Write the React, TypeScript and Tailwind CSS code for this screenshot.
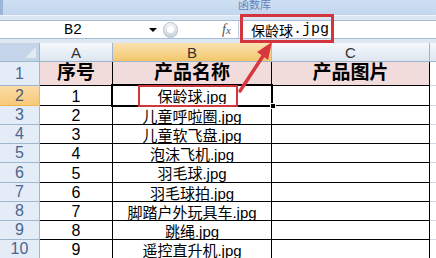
const rows: { n: string; name: string; h: string }[] = [
  { n: "1", name: "保龄球.jpg", h: "h-[20px]" },
  { n: "2", name: "儿童呼啦圈.jpg", h: "h-[19px]" },
  { n: "3", name: "儿童软飞盘.jpg", h: "h-[19px]" },
  { n: "4", name: "泡沫飞机.jpg", h: "h-[19px]" },
  { n: "5", name: "羽毛球.jpg", h: "h-[20px]" },
  { n: "6", name: "羽毛球拍.jpg", h: "h-[19px]" },
  { n: "7", name: "脚踏户外玩具车.jpg", h: "h-[19px]" },
  { n: "8", name: "跳绳.jpg", h: "h-[19px]" },
  { n: "9", name: "遥控直升机.jpg", h: "h-[19px]" },
];

export default function App() {
  return (
    <div className="relative h-[258px] w-[436px] overflow-hidden bg-white font-['Liberation_Sans','Noto_Sans_CJK_SC',sans-serif] text-black">
      {/* ribbon group strip */}
      <div className="flex h-[15px] border-l-[3px] border-[#9cb6d8] bg-linear-to-b from-[#cfdff2] to-[#c2d6ee]">
        <span className="ml-[235px] text-[11px] leading-[11px] text-[#6584b6]">函数库</span>
      </div>
      <div className="h-[5px] border-t border-[#eef3fa] bg-[#dbe6f4]" />

      {/* formula bar */}
      <div className="flex h-[19px] items-center border-y border-[#a7bcd6] bg-white">
        <div className="w-[146px] pt-px text-center font-['Liberation_Mono',monospace] text-[15px] leading-none">B2</div>
        <div className="flex w-[14px] justify-center">
          <span className="h-0 w-0 border-x-[4px] border-t-[4px] border-x-transparent border-t-black" />
        </div>
        <div className="ml-[3px] grid h-[16px] w-[15px] place-items-center rounded-full border border-[#b5c0cc] bg-linear-to-b from-[#f4f6f9] to-[#c9d1db]">
          <span className="h-[7px] w-[7px] rounded-full bg-white" />
        </div>
        <div className="w-[44px]" />
        <div className="w-[16px] font-['Liberation_Serif',serif] text-[14px] italic leading-none text-[#555]">
          f<span className="text-[11px]">x</span>
        </div>
        <div className="flex h-full flex-1 items-center border-l border-[#c0cddd] pl-[12px] text-[14px] leading-none">
          <span className="font-['Noto_Sans_CJK_SC',sans-serif]">保龄球</span>
          <span className="font-['Liberation_Mono',monospace] text-[15px]">.jpg</span>
        </div>
      </div>
      <div className="h-[4px] bg-[#dfe7f2]" />

      {/* column headers */}
      <div className="flex h-[19px] border-b border-[#9eb6ce] text-[15px] leading-none text-[#333]">
        <div className="relative w-[40px] border-r border-[#9eb6ce] bg-[#c4d5ea]">
          <span className="absolute bottom-[3px] right-[3px] h-0 w-0 border-l-[11px] border-t-[11px] border-l-transparent border-t-transparent border-b-0 border-r-[11px] border-r-[#e3e9f1]" />
        </div>
        <div className="flex w-[73px] items-center justify-center border-r border-[#9eb6ce] bg-linear-to-b from-[#f5f8fc] to-[#dde6f1]">A</div>
        <div className="flex w-[159px] items-center justify-center border-r border-[#f2b451] bg-linear-to-b from-[#fbe2b0] to-[#f3c66b]">B</div>
        <div className="flex w-[158px] items-center justify-center border-r border-[#9eb6ce] bg-linear-to-b from-[#f5f8fc] to-[#dde6f1]">C</div>
        <div className="flex-1 bg-linear-to-b from-[#f5f8fc] to-[#dde6f1]" />
      </div>

      {/* row 1 (titles) */}
      <div className="flex h-[24px]">
        <div className="flex w-[40px] items-center justify-center border-r border-b border-[#9eb6ce] bg-[#e4ecf7] text-[16px] text-[#4a6690]">1</div>
        <div className="flex w-[73px] items-center justify-center border-r border-b border-black bg-[#f2dcdb] text-[19px] font-bold">序号</div>
        <div className="flex w-[159px] items-center justify-center border-r border-b border-black bg-[#f2dcdb] text-[19px] font-bold">产品名称</div>
        <div className="flex w-[158px] items-center justify-center border-r border-b border-black bg-[#f2dcdb] text-[19px] font-bold">产品图片</div>
        <div className="flex-1 border-b border-[#d0d7e5]" />
      </div>

      {/* data rows */}
      {rows.map((r, i) => (
        <div key={r.n} className={`flex ${r.h}`}>
          <div
            className={`flex w-[40px] items-center justify-center border-r border-b text-[16px] leading-none ${
              i === 0
                ? "border-[#f2b451] bg-linear-to-b from-[#fbdca6] to-[#f5c978] text-[#4a5a70]"
                : "border-[#9eb6ce] bg-[#e4ecf7] text-[#4a6690]"
            }`}
          >
            {i + 2}
          </div>
          <div className="flex w-[73px] items-center justify-center border-r border-b border-black pt-[2px] text-[16px] leading-none">{r.n}</div>
          <div className="flex w-[159px] items-center justify-center border-r border-b border-black pt-[2px] text-[15px] leading-none">{r.name}</div>
          <div className="w-[158px] border-r border-b border-black" />
          <div className="flex-1 border-b border-[#d0d7e5]" />
        </div>
      ))}

      {/* active cell outline + fill handle */}
      <div className="absolute left-[111px] top-[84px] h-[23px] w-[162px] border-2 border-black">
        <div className="h-full w-full border border-white" />
      </div>
      <div className="absolute left-[270px] top-[103px] h-[6px] w-[6px] border border-white bg-black" />

      {/* red annotations */}
      <div className="absolute left-[138px] top-[85px] h-[22px] w-[100px] border-2 border-[#d2353c]" />
      <div className="absolute left-[240px] top-[14px] h-[29px] w-[94px] border-[3px] border-[#d2353c]" />
      <svg className="pointer-events-none absolute left-0 top-0" width="436" height="258" viewBox="0 0 436 258">
        <line x1="240" y1="91" x2="263" y2="56" stroke="#d9373f" strokeWidth="3.5" strokeLinecap="round" />
        <polygon points="272,42 257,52 268,60" fill="#d9373f" />
      </svg>
    </div>
  );
}
